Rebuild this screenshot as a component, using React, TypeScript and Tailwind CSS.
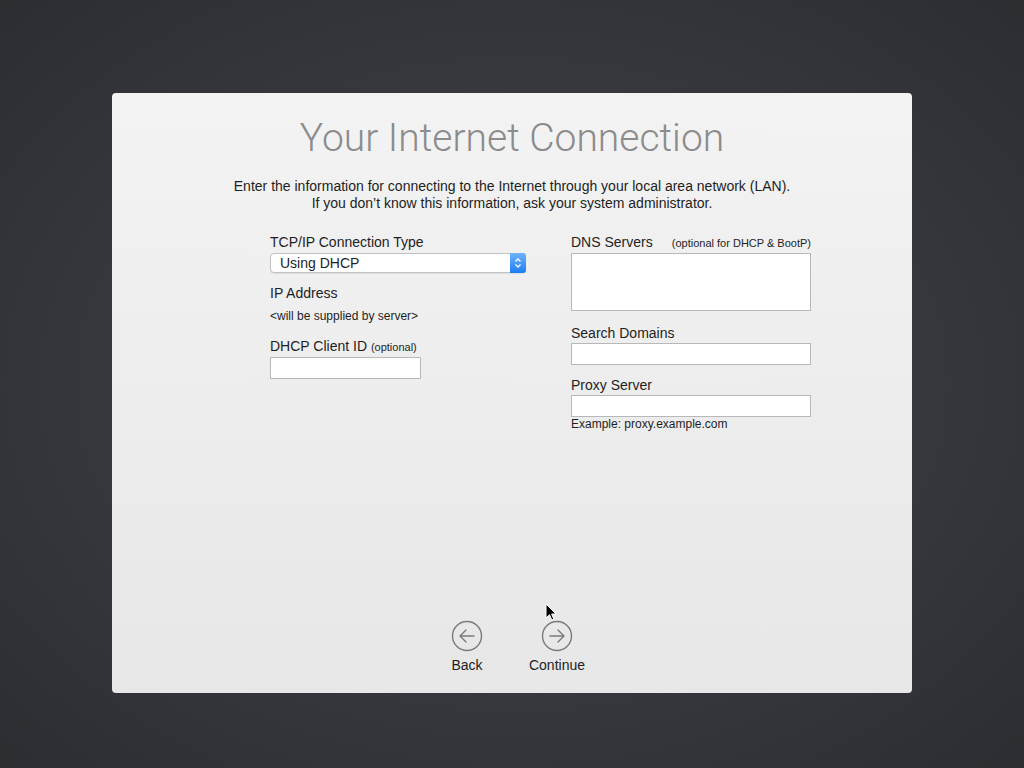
import React from 'react';

const font = { fontFamily: '"Helvetica Neue", "Liberation Sans", Arial, sans-serif' };

function CircleArrow({ dir }: { dir: 'left' | 'right' }) {
  return (
    <svg width="32" height="32" viewBox="0 0 32 32" fill="none" stroke="#7a7a7a" strokeWidth="1.4">
      <circle cx="16" cy="16" r="14.5" />
      {dir === 'left' ? (
        <path d="M23 16H9M15 10l-6 6 6 6" strokeLinecap="round" strokeLinejoin="round" />
      ) : (
        <path d="M9 16h14M17 10l6 6-6 6" strokeLinecap="round" strokeLinejoin="round" />
      )}
    </svg>
  );
}

function TextField({ className }: { className: string }) {
  return <div className={`bg-white border border-[#b8b8b8] ${className}`} />;
}

export default function App() {
  return (
    <div
      className="relative w-[1024px] h-[768px] flex items-start justify-center pt-[93px] bg-[radial-gradient(ellipse_at_center,#45464c_0%,#36373c_60%,#2c2d31_100%)]"
      style={font}
    >
      <div className="w-[800px] h-[600px] rounded-[4px] bg-gradient-to-b from-[#f3f3f3] to-[#e7e7e7] flex flex-col items-center">
        <h1 className="mt-[22px] font-['Roboto',sans-serif] text-[39px] leading-[46px] font-light text-[#8c8c8c]">
          Your Internet Connection
        </h1>
        <p className="mt-[17px] text-[14px] leading-[17px] text-[#1e1e1e] text-center">
          Enter the information for connecting to the Internet through your local area network (LAN).
          <br />
          If you don’t know this information, ask your system administrator.
        </p>

        <div className="mt-[22px] ml-[57px] w-[541px] flex justify-between text-[#1e1e1e]">
          {/* left column */}
          <div className="w-[256px] flex flex-col">
            <div className="text-[14px] leading-[16px]">TCP/IP Connection Type</div>
            <div className="mt-[3px] h-[20px] flex items-stretch rounded-[4px] border border-[#c2c2c2] bg-white shadow-[0_1px_1px_rgba(0,0,0,0.08)]">
              <div className="flex-1 pl-[9px] text-[14px] leading-[18px]">Using DHCP</div>
              <div className="w-[16px] rounded-r-[3px] bg-gradient-to-b from-[#6cb3fa] to-[#1a7ef2] flex items-center justify-center -my-px -mr-px">
                <svg width="8" height="12" viewBox="0 0 8 12" fill="none" stroke="white" strokeWidth="1.3">
                  <path d="M1.5 4.5L4 2l2.5 2.5M1.5 7.5L4 10l2.5-2.5" />
                </svg>
              </div>
            </div>
            <div className="mt-[12px] text-[14px] leading-[16px]">IP Address</div>
            <div className="mt-[9px] text-[12px] leading-[13px]">&lt;will be supplied by server&gt;</div>
            <div className="mt-[15px] text-[14px] leading-[16px]">
              DHCP Client ID <span className="text-[11px]">(optional)</span>
            </div>
            <TextField className="mt-[2px] w-[151px] h-[22px]" />
          </div>

          {/* right column */}
          <div className="w-[240px] flex flex-col">
            <div className="flex items-baseline justify-between">
              <span className="text-[14px] leading-[16px]">DNS Servers</span>
              <span className="text-[11px]">(optional for DHCP &amp; BootP)</span>
            </div>
            <TextField className="mt-[1px] h-[58px]" />
            <div className="mt-[14px] text-[14px] leading-[16px]">Search Domains</div>
            <TextField className="mt-[2px] h-[22px]" />
            <div className="mt-[12px] text-[14px] leading-[16px]">Proxy Server</div>
            <TextField className="mt-[2px] h-[22px]" />
            <div className="mt-[0px] text-[12px] leading-[14px]">Example: proxy.example.com</div>
          </div>
        </div>

        <div className="mt-auto mb-[17px] flex gap-[28px] text-[14px] text-[#1e1e1e]">
          <div className="w-[62px] flex flex-col items-center gap-[3px]">
            <CircleArrow dir="left" />
            <span>Back</span>
          </div>
          <div className="w-[62px] flex flex-col items-center gap-[3px]">
            <CircleArrow dir="right" />
            <span>Continue</span>
          </div>
        </div>
      </div>

      <svg className="absolute left-[545px] top-[603px]" width="12" height="19" viewBox="0 0 12 19">
        <path d="M1 1v14l3.5-3.3 2.3 5.3 2-0.9-2.2-5.1H11z" fill="black" stroke="white" strokeWidth="1" />
      </svg>
    </div>
  );
}
